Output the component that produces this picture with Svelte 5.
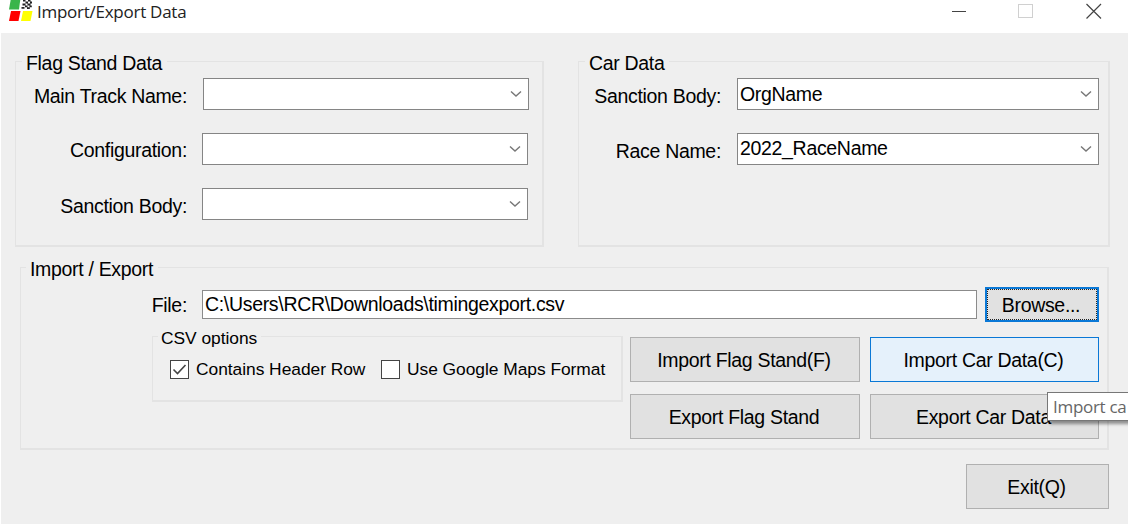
<script>
  const trackFields = ['Main Track Name:', 'Configuration:', 'Sanction Body:'];
  const carFields = [
    { label: 'Sanction Body:', value: 'OrgName' },
    { label: 'Race Name:', value: '2022_RaceName' }
  ];
</script>

{#snippet combo(value)}
  <div class="combo">
    <span>{value}</span>
    <svg width="12" height="8" viewBox="0 0 12 8"><path d="M1 1.4 6 6 11 1.4" /></svg>
  </div>
{/snippet}

<div class="window">
  <header>
    <svg class="logo" width="24" height="22" viewBox="0 0 24 22">
      <path d="M2 -2H11.500L10 9.500H0Z" fill="#39b54a" />
      <path d="M2 11H11.500L9.500 21H0Z" fill="#f00" />
      <path d="M14 11H23.500L21.500 21H12Z" fill="#ff0" />
      <path d="M14 0h2.500v1.500h-2.500zM19 0h2.500v1.500h-2.500zM16.500 1.500h2.500v2h-2.500zM21 1.500h2v2h-2zM13.500 3.500h3v2h-3zM18.500 3.500h3v2h-3zM16 5.500h2.500v1.800h-2.500zM20.500 5.500h2.300v1.800h-2.300zM12.500 7h3v1.800h-3zM18 7.200h2.800v1.800h-2.800z" fill="#222" />
    </svg>
    <h1>Import/Export Data</h1>
    <svg class="controls" width="150" height="22" viewBox="0 0 150 22">
      <path d="M0 11.500H14" stroke="#444" />
      <rect x="66.500" y="4.500" width="14" height="13" stroke="#d0d0d0" />
      <path d="M134.500 4 149 18.500M149 4 134.500 18.500" stroke="#444" stroke-width="1.200" />
    </svg>
  </header>

  <main>
    <div class="top">
      <section class="group flags">
        <h2>Flag Stand Data</h2>
        <div class="fields">
          {#each trackFields as label}
            <div class="field"><label>{label}</label>{@render combo('')}</div>
          {/each}
        </div>
      </section>
      <section class="group cars">
        <h2>Car Data</h2>
        <div class="fields">
          {#each carFields as f}
            <div class="field"><label>{f.label}</label>{@render combo(f.value)}</div>
          {/each}
        </div>
      </section>
    </div>

    <section class="group transfer">
      <h2>Import / Export</h2>
      <div class="file">
        <label>File:</label>
        <div class="path"><span>C:\Users\RCR\Downloads\timingexport.csv</span></div>
        <button class="browse"><span>Browse...</span></button>
      </div>
      <div class="lower">
        <section class="group csv">
          <h3>CSV options</h3>
          <div class="checks">
            <i class="box"><svg width="17" height="17" viewBox="0 0 17 17"><path d="M2.500 8.500 6.500 12.500 14.500 4" /></svg></i>
            <span class="header-row">Contains Header Row</span>
            <i class="box"></i>
            <span class="maps">Use Google Maps Format</span>
          </div>
        </section>
        <div class="actions">
          <button>Import Flag Stand(F)</button>
          <button class="hot">Import Car Data(C)</button>
          <button>Export Flag Stand</button>
          <div class="anchor">
            <button>Export Car Data</button>
            <div class="tip">Import ca</div>
          </div>
        </div>
      </div>
    </section>

    <button class="exit">Exit(Q)</button>
  </main>
</div>

<style>
  :global(body) { background: #fff; }
  * { box-sizing: border-box; }
  .window {
    width: 1128px; height: 526px; overflow: hidden; background: #fff;
    font: 19.5px/24px "Liberation Sans", Arial, sans-serif; color: #000;
    letter-spacing: -0.32px; white-space: nowrap;
  }
  header { height: 33px; display: flex; align-items: flex-start; padding-left: 9px; }
  .logo { flex: none; }
  h1 {
    margin: 0 0 0 4px; flex: 1;
    font: 400 17px/24px "Open Sans", "Segoe UI", sans-serif; color: #222;
    letter-spacing: -0.26px;
  }
  .controls { flex: none; margin-right: 26px; fill: none; }
  main {
    margin-left: 1px; height: 491px; padding: 28px 18px 0 14px; background: #efefef;
    display: flex; flex-direction: column;
  }
  .top { display: flex; justify-content: space-between; }
  .group { border: 2px solid #e3e3e3; border-width: 1px 2px 2px 1px; }
  h2, h3 {
    font: inherit; margin: -11px 0 0 6px; width: fit-content;
    background: #efefef; padding: 0 5px 0 4px;
  }
  .top .group { height: 186px; }
  .flags { width: 529px; }
  .cars { width: 532px; }
  .fields { display: flex; flex-direction: column; gap: 23px; padding-top: 3px; }
  .field { display: flex; justify-content: flex-end; gap: 15px; height: 32px; }
  .flags .field { padding-right: 14px; }
  .flags .field:first-child { padding-right: 13px; }
  .flags .field:first-child .combo { margin-left: 1px; }
  .cars .field { padding-right: 9px; gap: 16px; }
  label { padding-top: 5px; }
  .field:first-child label, .field:last-child label { padding-top: 6px; }
  .combo {
    width: 326px; height: 32px; background: #fff; border: 1px solid #858585;
    display: flex; justify-content: space-between; padding: 3px 6px 0 2px;
  }
  .cars .combo { width: 362px; }
  .cars .field:last-child .combo span { margin-top: -1px; }
  .combo svg { margin-top: 8px; fill: none; stroke: #777; stroke-width: 1.400; }

  .transfer { margin: 20px 1px 0 5px; height: 183px; flex: none; padding-right: 8px; }
  .transfer > h2 { margin: -11px 0 0 5px; }
  .file { display: flex; align-items: flex-start; margin-top: 6px; height: 35px; }
  .file label { width: 166px; text-align: right; padding-top: 6px; }
  .path {
    margin: 3px 8px 0 15px; width: 775px; height: 29px; background: #fff;
    border: 1px solid #8b8b8b; padding: 1px 2px;
  }
  button {
    font: inherit; letter-spacing: inherit; color: inherit; background: #e1e1e1;
    border: 1px solid #b0b0b0; padding: 1px 2px 0 0; border-radius: 0;
    display: flex; align-items: center; justify-content: center;
  }
  .hot { background: #e5f1fb; border-color: #0a78d6; }
  .browse {
    width: 114px; height: 35px; border: 2px solid #0a78d6; padding-top: 0;
    outline: 1px dotted #222; outline-offset: -3px;
  }
  .lower { display: flex; justify-content: space-between; margin-top: 14px; padding-left: 131px; }
  .csv { width: 471px; height: 66px; font-size: 17.4px; letter-spacing: -0.04px; }
  .csv h3 { margin: -11px 0 0 5px; padding: 0 4px 0 3px; }
  .checks { display: flex; align-items: center; padding: 7px 0 0 17px; }
  .box { width: 19px; height: 19px; background: #fff; border: 1px solid #444; display: block; flex: none; }
  .box svg { display: block; fill: none; stroke: #444; stroke-width: 1.600; }
  .checks span { margin-left: 7px; }
  .header-row { width: 185px; }
  .actions { display: grid; grid-template: 45px 45px / 230px 229px; gap: 12px 10px; margin-top: 1px; }
  .anchor { position: relative; display: grid; }
  .tip {
    position: absolute; left: 177px; top: -2px; width: 110px; height: 29px;
    background: #fff; border: 1px solid #777; box-shadow: 3px 3px 3px rgba(0, 0, 0, .4);
    font: 17px/27px "Open Sans", "Segoe UI", sans-serif; color: #666; padding-left: 5px;
    letter-spacing: -0.3px;
  }
  .exit { align-self: flex-end; width: 143px; height: 45px; margin: 14px 1px 0 0; flex: none; }
</style>
